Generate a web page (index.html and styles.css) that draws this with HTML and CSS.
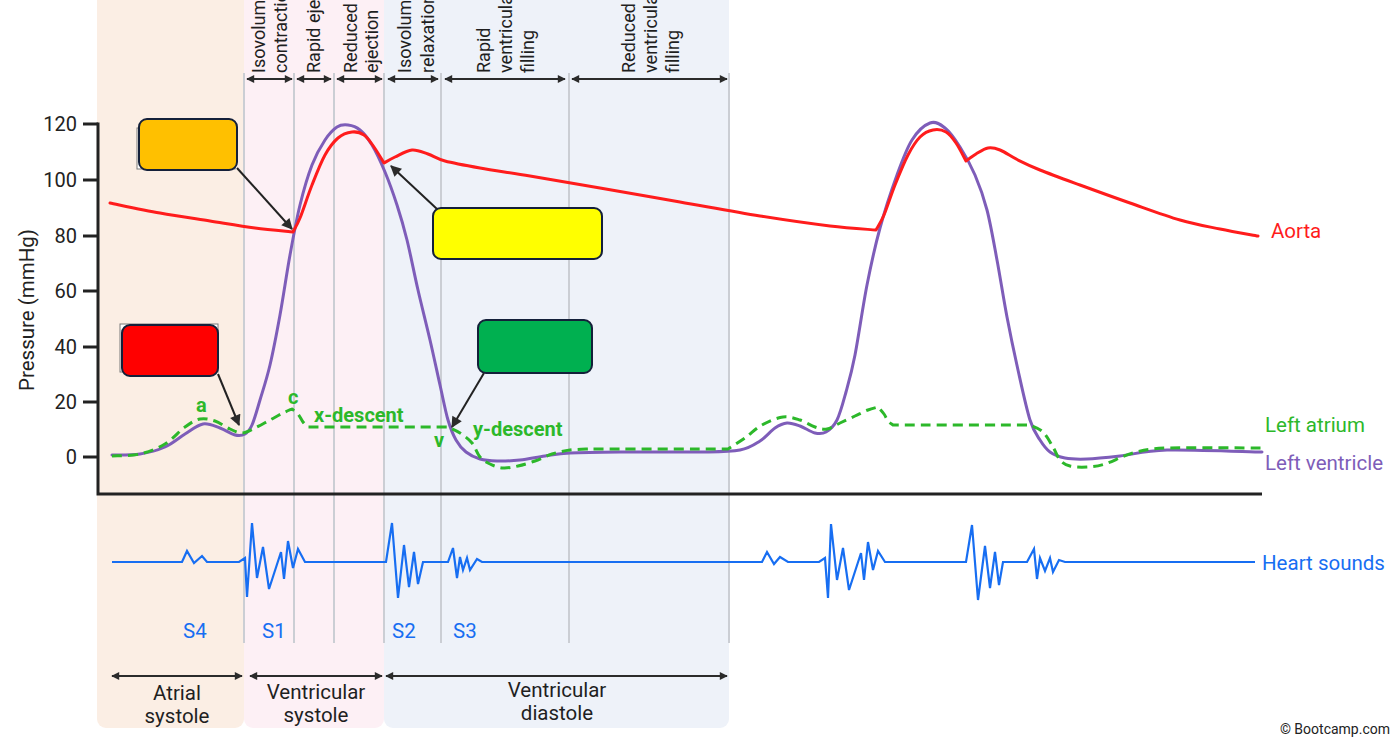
FILE: index.html
```html
<!DOCTYPE html>
<html lang="en">
<head>
<meta charset="utf-8">
<title>Cardiac cycle – Wiggers diagram</title>
<link rel="stylesheet" href="styles.css">
</head>
<body>
<main class="figure">
<svg class="chart" width="1393" height="741" viewBox="0 0 1393 741" xmlns="http://www.w3.org/2000/svg">
  <defs>
    <marker id="tip-s" viewBox="0 0 10 10" refX="9" refY="5" markerWidth="9" markerHeight="8" markerUnits="userSpaceOnUse" orient="auto-start-reverse">
      <path class="head" d="M0,0 L10,5 L0,10 z"/>
    </marker>
    <marker id="tip-l" viewBox="0 0 10 10" refX="9" refY="5" markerWidth="13" markerHeight="11" markerUnits="userSpaceOnUse" orient="auto">
      <path class="head" d="M0,0 L10,5 L0,10 z"/>
    </marker>
  </defs>

  <!-- phase panels -->
  <rect class="panel atrial" x="97" y="-20" width="147" height="748" rx="9"/>
  <rect class="panel vsys" x="244" y="-20" width="140" height="748" rx="9"/>
  <rect class="panel vdia" x="384" y="-20" width="345" height="748" rx="9"/>

  <!-- dividers -->
  <g class="dividers">
    <line x1="244" y1="73" x2="244" y2="643"/>
    <line x1="294" y1="73" x2="294" y2="643"/>
    <line x1="334" y1="73" x2="334" y2="643"/>
    <line x1="384" y1="73" x2="384" y2="643"/>
    <line x1="441" y1="73" x2="441" y2="643"/>
    <line x1="569" y1="73" x2="569" y2="643"/>
    <line x1="729" y1="73" x2="729" y2="643"/>
  </g>

  <!-- phase names (rotated) -->
  <g class="phase">
    <text transform="translate(265 73) rotate(-90)">Isovolumetric</text>
    <text transform="translate(287 73) rotate(-90)">contraction</text>
    <text transform="translate(320 73) rotate(-90)">Rapid ejection</text>
    <text transform="translate(357 73) rotate(-90)">Reduced</text>
    <text transform="translate(378 73) rotate(-90)">ejection</text>
    <text transform="translate(411 73) rotate(-90)">Isovolumetric</text>
    <text transform="translate(434 73) rotate(-90)">relaxation</text>
    <text transform="translate(490 73) rotate(-90)">Rapid</text>
    <text transform="translate(512 73) rotate(-90)">ventricular</text>
    <text transform="translate(534 73) rotate(-90)">filling</text>
    <text transform="translate(635 73) rotate(-90)">Reduced</text>
    <text transform="translate(657 73) rotate(-90)">ventricular</text>
    <text transform="translate(679 73) rotate(-90)">filling</text>
  </g>

  <!-- phase span arrows -->
  <g class="span">
    <line x1="247" y1="79" x2="292" y2="79"/>
    <line x1="297" y1="79" x2="331" y2="79"/>
    <line x1="337" y1="79" x2="382" y2="79"/>
    <line x1="388" y1="79" x2="438" y2="79"/>
    <line x1="445" y1="79" x2="565" y2="79"/>
    <line x1="572" y1="79" x2="727" y2="79"/>
    <line x1="112" y1="676" x2="242" y2="676"/>
    <line x1="250" y1="676" x2="382" y2="676"/>
    <line x1="386" y1="676" x2="727" y2="676"/>
  </g>

  <!-- axes -->
  <path class="axis" d="M98,122.5 V494 H1262"/>
  <g class="ticks">
    <line x1="83" y1="124" x2="98" y2="124"/>
    <line x1="83" y1="180" x2="98" y2="180"/>
    <line x1="83" y1="236" x2="98" y2="236"/>
    <line x1="83" y1="291" x2="98" y2="291"/>
    <line x1="83" y1="347" x2="98" y2="347"/>
    <line x1="83" y1="402" x2="98" y2="402"/>
    <line x1="83" y1="457" x2="98" y2="457"/>
  </g>
  <g class="tick-label">
    <text x="77" y="131">120</text>
    <text x="77" y="187">100</text>
    <text x="77" y="243">80</text>
    <text x="77" y="298">60</text>
    <text x="77" y="354">40</text>
    <text x="77" y="409">20</text>
    <text x="77" y="464">0</text>
  </g>
  <text class="axis-title" transform="translate(34 310) rotate(-90)">Pressure (mmHg)</text>

  <!-- pressure curves -->
  <path class="curve lv" data-pts="112,455 140,454 165,447 185,434 203,424 220,428 235,435 245,434 252,425 260,400 270,365 280,315 290,255 300,205 312,165 325,140 337,127 348,125 360,130 372,145 385,172 397,205 407,240 418,290 430,340 440,385 448,420 456,440 466,452 480,459 497,461 520,460 545,456 570,453 620,452 700,452 740,450 760,441 775,428 787,423 800,426 815,433 826,432 837,420 846,392 855,355 867,285 880,228 897,175 912,140 930,123 945,128 960,147 975,175 987,210 997,260 1007,317 1018,370 1030,420 1040,440 1050,452 1065,458 1087,459 1120,456 1167,450 1262,452"/>
  <path class="curve aorta" data-pts="110,203 160,213 210,221 255,228 293,232 | 293,232 300,218 312,185 325,155 338,138 352,132 364,135 374,147 384,163 | 384,163 395,157 412,150 428,154 445,161 480,168 530,176 600,188 680,202 760,216 830,226 876,230 | 876,230 884,215 895,185 908,155 920,137 933,130 946,132 956,143 966,161 | 966,161 976,154 988,148 1000,150 1018,160 1040,170 1080,185 1130,203 1180,220 1220,229 1258,236"/>
  <path class="curve la" data-pts="112,456 140,454 165,444 185,427 200,419 215,421 230,429 242,433 255,428 270,420 283,413 292,409 | 292,409 298,414 303,422 308,427 | 308,427 448,427 | 448,427 460,433 472,443 480,457 490,464 503,468 518,466 535,461 552,454 570,450 590,449 | 590,449 728,449 | 728,449 745,438 762,425 783,417 800,420 815,427 827,429 840,423 855,416 868,410 878,407 | 878,407 884,414 888,421 893,425 | 893,425 1030,425 | 1030,425 1043,432 1053,447 1060,460 1070,466 1087,467 1105,464 1133,453 1167,448 1262,448"/>

  <!-- curve letters -->
  <g class="wave-label">
    <text x="196" y="412">a</text>
    <text x="288" y="404">c</text>
    <text x="314" y="422">x-descent</text>
    <text x="434" y="447">v</text>
    <text x="473" y="436">y-descent</text>
  </g>

  <!-- series labels -->
  <text class="series aorta-t" x="1271" y="238">Aorta</text>
  <text class="series la-t" x="1265" y="432">Left atrium</text>
  <text class="series lv-t" x="1265" y="470">Left ventricle</text>
  <text class="series hs-t" x="1262" y="570">Heart sounds</text>

  <!-- heart sounds -->
  <polyline class="sound" points="112,562 182,562 187,551 194,563 202,556 207,562 239,562 245,558 247,597 252,523 257,578 263,547 269,589 281,552 284,579 288,541 293,568 298,549 305,562 386,562 392,523 398,598 404,545 409,587 414,552 418,584 423,562 448,562 453,548 457,578 460,557 463,570 467,558 470,570 477,559 482,562 762,562 767,552 774,564 780,557 788,562 819,562 825,558 828,598 831,524 837,580 843,548 849,590 861,553 864,580 868,542 873,570 878,551 885,562 966,562 972,525 978,600 985,546 990,588 995,552 999,585 1003,562 1027,562 1034,549 1037,579 1040,558 1045,571 1050,558 1053,572 1059,560 1065,562 1255,562"/>
  <g class="sound-label">
    <text x="183" y="638">S4</text>
    <text x="262" y="638">S1</text>
    <text x="392" y="638">S2</text>
    <text x="453" y="638">S3</text>
  </g>

  <!-- period names -->
  <g class="period">
    <text x="177" y="700">Atrial</text>
    <text x="177" y="723">systole</text>
    <text x="316" y="699">Ventricular</text>
    <text x="316" y="722">systole</text>
    <text x="557" y="697">Ventricular</text>
    <text x="557" y="720">diastole</text>
  </g>

  <!-- blank answer boxes -->
  <rect class="ghost" x="137" y="128" width="98" height="41"/>
  <rect class="box orange" x="139" y="119" width="98" height="51" rx="8"/>
  <rect class="ghost" x="120" y="324" width="98" height="48"/>
  <rect class="box red" x="122" y="325" width="96" height="51" rx="8"/>
  <rect class="box yellow" x="433" y="208" width="169" height="51" rx="8"/>
  <rect class="box green" x="478" y="320" width="114" height="53" rx="8"/>

  <g class="pointer">
    <line x1="237" y1="168" x2="292" y2="229"/>
    <line x1="218" y1="374" x2="239" y2="425"/>
    <line x1="437" y1="209" x2="391" y2="166"/>
    <line x1="484" y1="373" x2="452" y2="427"/>
  </g>

  <text class="credit" x="1390" y="734">© Bootcamp.com</text>
</svg>
</main>
<script src="script.js"></script>
</body>
</html>
```

FILE: styles.css
```css
html, body {
  margin: 0;
  padding: 0;
  background: #ffffff;
  overflow: hidden;
}

.figure {
  display: block;
  width: 1393px;
  height: 741px;
  overflow: hidden;
}

.chart {
  display: block;
  font-family: "Roboto", "Liberation Sans", sans-serif;
}

.panel { stroke: none; }
.atrial { fill: #fbeee4; }
.vsys { fill: #fdf0f5; }
.vdia { fill: #eef2f9; }

.dividers line {
  stroke: #cbced4;
  stroke-width: 2;
}

.phase text {
  font-size: 18px;
  fill: #1f1f1f;
}

.span line {
  stroke: #2b2b2b;
  stroke-width: 2;
  marker-start: url(#tip-s);
  marker-end: url(#tip-s);
}

.head { fill: #2b2b2b; }

.axis {
  fill: none;
  stroke: #222222;
  stroke-width: 3;
}

.ticks line {
  stroke: #222222;
  stroke-width: 3;
}

.tick-label text {
  font-size: 20px;
  fill: #222222;
  text-anchor: end;
}

.axis-title {
  font-size: 20.5px;
  fill: #222222;
  text-anchor: middle;
}

.curve {
  fill: none;
  stroke-width: 3;
  stroke-linecap: round;
  stroke-linejoin: round;
}
.lv { stroke: #7e5db9; }
.aorta { stroke: #ff1c1c; }
.la {
  stroke: #2cb82a;
  stroke-dasharray: 10 6;
  stroke-linecap: butt;
}

.wave-label text {
  font-size: 20px;
  font-weight: 700;
  fill: #2cb82a;
}

.series {
  font-size: 20.5px;
}
.aorta-t { fill: #ff1c1c; }
.la-t { fill: #2cb82a; }
.lv-t { fill: #7e5db9; }
.hs-t { fill: #176ef2; }

.sound {
  fill: none;
  stroke: #176ef2;
  stroke-width: 2.2;
  stroke-linejoin: miter;
}

.sound-label text {
  font-size: 20.5px;
  fill: #176ef2;
}

.period text {
  font-size: 20.5px;
  fill: #1f1f1f;
  text-anchor: middle;
}

.ghost {
  fill: #ffffff;
  stroke: #7a7a7a;
  stroke-width: 1;
}

.box {
  stroke: #14203a;
  stroke-width: 2;
}
.orange { fill: #ffc000; }
.red { fill: #ff0000; }
.yellow { fill: #ffff00; }
.green { fill: #00b050; }

.pointer line {
  stroke: #222222;
  stroke-width: 2;
  marker-end: url(#tip-l);
}

.credit {
  font-size: 14px;
  fill: #222222;
  text-anchor: end;
}
```

FILE: script.js
```js
(function () {
  function r(v) { return Math.round(v * 100) / 100; }
  var paths = document.querySelectorAll('path[data-pts]');
  Array.prototype.forEach.call(paths, function (el) {
    var segs = el.getAttribute('data-pts').split('|').map(function (s) {
      return s.trim().split(/\s+/).map(function (p) {
        return p.split(',').map(Number);
      });
    });
    var d = 'M' + segs[0][0].join(',');
    segs.forEach(function (pts) {
      for (var i = 0; i < pts.length - 1; i++) {
        var p0 = pts[i - 1] || pts[i];
        var p1 = pts[i];
        var p2 = pts[i + 1];
        var p3 = pts[i + 2] || pts[i + 1];
        var t = 1 / 6;
        var c1 = [r(p1[0] + (p2[0] - p0[0]) * t), r(p1[1] + (p2[1] - p0[1]) * t)];
        var c2 = [r(p2[0] - (p3[0] - p1[0]) * t), r(p2[1] - (p3[1] - p1[1]) * t)];
        d += ' C' + c1.join(',') + ' ' + c2.join(',') + ' ' + p2.join(',');
      }
    });
    el.setAttribute('d', d);
  });
})();
```
